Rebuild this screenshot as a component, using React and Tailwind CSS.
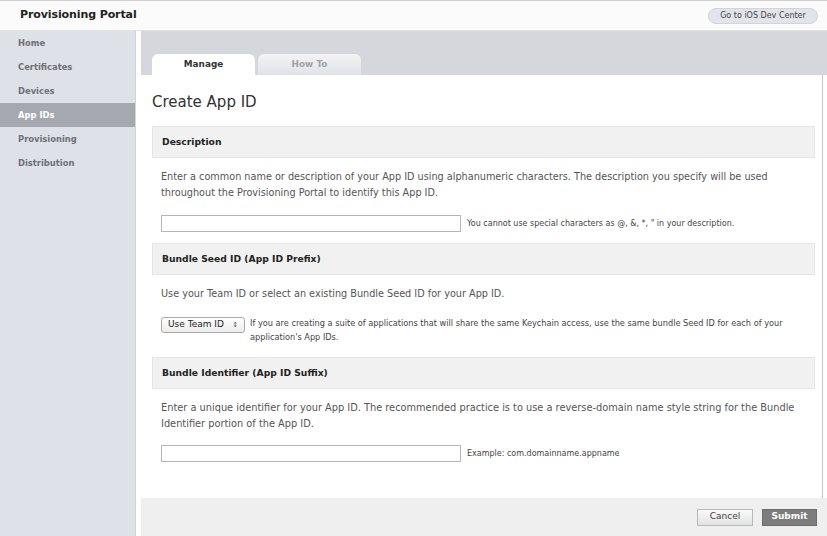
import React, { useState } from 'react';

const font = { fontFamily: '"DejaVu Sans", "Liberation Sans", sans-serif' };

const navItems = ['Home', 'Certificates', 'Devices', 'App IDs', 'Provisioning', 'Distribution'];

function SectionHeader({ children }) {
    return (
        <div className="h-[32px] flex items-center pl-[9px] bg-[#f1f1f1] border border-[#e6e6e6] text-[9.2px] font-bold text-[#222]">
            {children}
        </div>
    );
}

function App() {
    const [active] = useState('App IDs');
    const [tab, setTab] = useState('Manage');

    return (
        <div className="w-[827px] h-[536px] flex flex-col bg-white overflow-hidden" style={font}>
            {/* Top bar */}
            <div className="h-[31px] flex items-center justify-between pl-[20px] pr-[9px] bg-[#fbfbfb] border-t border-[#d0d0d0] border-b border-b-[#e2e2e2]">
                <span className="text-[11px] font-bold text-[#222] tracking-[-0.1px]">Provisioning Portal</span>
                <button className="h-[16px] w-[110px] rounded-full bg-[#e2e4ea] border border-[#d2d4da] text-[8px] text-[#444] leading-none">
                    Go to iOS Dev Center
                </button>
            </div>

            <div className="flex flex-1 min-h-0">
                {/* Sidebar */}
                <div className="w-[136px] bg-[#dfe1e8] border-r border-[#d2d4db]">
                    {navItems.map((item) => (
                        <div key={item}
                             className={`h-[24px] flex items-center pl-[18px] text-[8.4px] font-bold ${
                                 item === active ? 'bg-[#a6a8b0] text-white' : 'text-[#6e7077]'
                             }`}>
                            {item}
                        </div>
                    ))}
                </div>

                {/* Main */}
                <div className="flex-1 flex flex-col pl-[5px] bg-white">
                    {/* Tab strip */}
                    <div className="h-[44px] bg-[#d6d7dc] flex items-end pl-[11px] gap-[3px]">
                        {['Manage', 'How To'].map((t) => (
                            <button key={t} onClick={() => setTab(t)}
                                    className={`w-[103px] h-[21px] rounded-t-[6px] text-[8.9px] font-bold ${
                                        t === tab
                                            ? 'bg-white text-[#333]'
                                            : 'bg-gradient-to-b from-[#f4f4f6] to-[#e1e2e7] text-[#a0a1a6]'
                                    }`}>
                                {t}
                            </button>
                        ))}
                    </div>

                    {/* Content */}
                    <div className="flex-1 mr-[4px] border-r border-[#c9c9c9] pl-[11px] pr-[7px]">
                        <h1 className="mt-[17px] mb-[14px] text-[15px] leading-[20px] text-[#333]">Create App ID</h1>

                        <SectionHeader>Description</SectionHeader>
                        <p className="mt-[11px] pl-[9px] text-[9.7px] leading-[16px] text-[#555]">
                            Enter a common name or description of your App ID using alphanumeric characters. The description you specify will be used<br />
                            throughout the Provisioning Portal to identify this App ID.
                        </p>
                        <div className="mt-[14px] pl-[9px] flex items-center gap-[6px]">
                            <input type="text" className="w-[300px] h-[17px] border border-[#b5b5b5] bg-white outline-none" />
                            <span className="text-[8px] text-[#444]">You cannot use special characters as @, &amp;, *, " in your description.</span>
                        </div>

                        <div className="mt-[11px]">
                            <SectionHeader>Bundle Seed ID (App ID Prefix)</SectionHeader>
                        </div>
                        <p className="mt-[11px] pl-[9px] text-[9.7px] leading-[16px] text-[#555]">
                            Use your Team ID or select an existing Bundle Seed ID for your App ID.
                        </p>
                        <div className="mt-[15px] pl-[9px] flex items-start gap-[5px]">
                            <div className="w-[84px] h-[16px] shrink-0 flex items-center justify-between px-[6px] border border-[#a9a9a9] rounded-[3px] bg-gradient-to-b from-white to-[#ececec] text-[9px] text-[#222]">
                                <span>Use Team ID</span>
                                <span className="text-[7px] text-[#555] leading-none">&#x2195;</span>
                            </div>
                            <span className="text-[8.2px] leading-[14px] text-[#444] -mt-[1px]">
                                If you are creating a suite of applications that will share the same Keychain access, use the same bundle Seed ID for each of your<br />
                                application's App IDs.
                            </span>
                        </div>

                        <div className="mt-[13px]">
                            <SectionHeader>Bundle Identifier (App ID Suffix)</SectionHeader>
                        </div>
                        <p className="mt-[11px] pl-[9px] text-[9.8px] leading-[16px] text-[#555]">
                            Enter a unique identifier for your App ID. The recommended practice is to use a reverse-domain name style string for the Bundle<br />
                            Identifier portion of the App ID.
                        </p>
                        <div className="mt-[13px] pl-[9px] flex items-center gap-[6px]">
                            <input type="text" className="w-[300px] h-[17px] border border-[#b5b5b5] bg-white outline-none" />
                            <span className="text-[8px] text-[#444]">Example: com.domainname.appname</span>
                        </div>
                    </div>

                    {/* Footer */}
                    <div className="h-[38px] bg-[#efefef] flex items-center justify-end gap-[9px] pr-[10px]">
                        <button className="w-[56px] h-[17px] border border-[#b9b9b9] bg-gradient-to-b from-[#fafafa] to-[#e2e2e2] text-[9px] text-[#444]">
                            Cancel
                        </button>
                        <button className="w-[55px] h-[17px] border border-[#6d6d6d] bg-[#7d7d7d] text-[9px] font-bold text-white">
                            Submit
                        </button>
                    </div>
                </div>
            </div>
        </div>
    );
}

export default App;
